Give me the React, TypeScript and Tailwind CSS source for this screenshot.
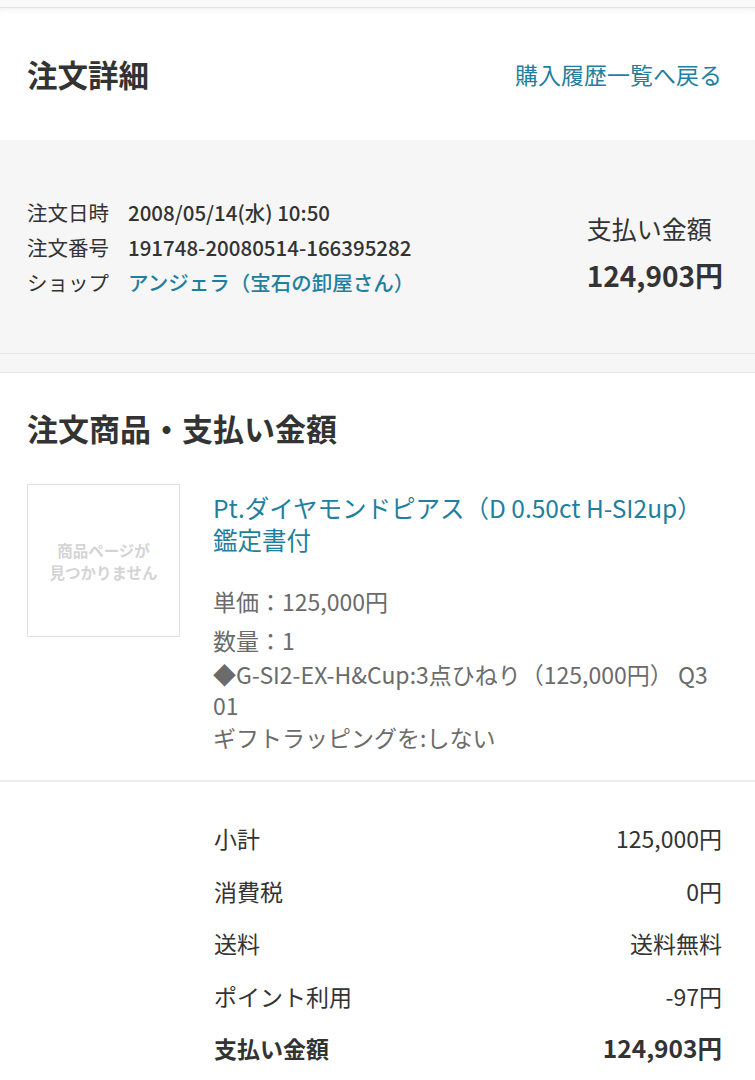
import React from 'react';

const summary = [
    { label: '小計', value: '125,000円' },
    { label: '消費税', value: '0円' },
    { label: '送料', value: '送料無料' },
    { label: 'ポイント利用', value: '-97円' },
];

export default function App() {
    return (
        <div className="min-h-screen flex flex-col bg-[#f6f6f6] text-[#333] font-['Noto_Sans_CJK_JP','Noto_Sans',sans-serif]">
            {/* top strip */}
            <div className="h-[7px] bg-[#fafafa]" />

            {/* Header */}
            <header className="h-[133px] bg-white border-t border-[#e4e4e4] shadow-[inset_0_5px_6px_-4px_rgba(0,0,0,0.07)] flex items-center justify-between pl-[27px] pr-[33px]">
                <h1 className="text-[30.5px] font-bold leading-none">注文詳細</h1>
                <a className="text-[23px] text-[#1f7f9f] leading-none">購入履歴一覧へ戻る</a>
            </header>

            {/* Order info */}
            <section className="h-[214px] border-b border-[#e6e6e6] flex items-center justify-between pl-[27px] pr-[32px] pt-[2px]">
                <div className="text-[20.5px] leading-[35px]">
                    <div className="flex">
                        <span className="w-[101px]">注文日時</span>
                        <span className="font-medium">2008/05/14(水) 10:50</span>
                    </div>
                    <div className="flex">
                        <span className="w-[101px]">注文番号</span>
                        <span className="font-medium">191748-20080514-166395282</span>
                    </div>
                    <div className="flex">
                        <span className="w-[101px]">ショップ</span>
                        <span className="font-medium text-[#1f7f9f]">アンジェラ（宝石の卸屋さん）</span>
                    </div>
                </div>
                <div className="whitespace-nowrap pt-[8px]">
                    <div className="text-[25px] leading-[36px]">支払い金額</div>
                    <div className="text-[28px] font-bold leading-[36px] mt-[11px]">124,903円</div>
                </div>
            </section>

            {/* Items & totals */}
            <section className="flex-1 mt-[18px] bg-white border-t border-[#e8e8e8] pb-[10px]">
                <h2 className="pl-[27px] pt-[37px] text-[31px] font-bold leading-[36px]">注文商品・支払い金額</h2>

                <div className="flex pl-[27px] pr-[13px] mt-[38px] pb-[27px] border-b-2 border-[#ececec]">
                    <div className="w-[153px] h-[153px] shrink-0 border border-[#e2e2e2] flex items-center justify-center">
                        <p className="text-center text-[15.5px] font-bold leading-[22px] text-[#d4d4d4]">
                            商品ページが
                            <br />
                            見つかりません
                        </p>
                    </div>
                    <div className="ml-[33px] pt-[8px] min-w-0 pr-[30px]">
                        <p className="text-[24.5px] leading-[32px] text-[#1f7f9f]">
                            Pt.ダイヤモンドピアス（D 0.50ct H-SI2up）鑑定書付
                        </p>
                        <div className="mt-[30px] text-[23px] text-[#6b6b6b]">
                            <p className="leading-[31px]">単価：125,000円</p>
                            <p className="leading-[31px] mt-[8px]">数量：1</p>
                            <p className="leading-[31px] mt-[3px]">
                                ◆G-SI2-EX-H&amp;Cup:3点ひねり（125,000円） Q3
                                <br />
                                01
                            </p>
                            <p className="leading-[31px] mt-[1px]">ギフトラッピングを:しない</p>
                        </div>
                    </div>
                </div>

                <div className="pl-[214px] pr-[33px] pt-[30px] text-[23px]">
                    {summary.map(row => (
                        <div key={row.label} className="h-[52.5px] flex items-center justify-between">
                            <span>{row.label}</span>
                            <span>{row.value}</span>
                        </div>
                    ))}
                    <div className="h-[52.5px] flex items-center justify-between font-bold">
                        <span>支払い金額</span>
                        <span className="text-[24.5px]">124,903円</span>
                    </div>
                </div>
            </section>
        </div>
    );
}
